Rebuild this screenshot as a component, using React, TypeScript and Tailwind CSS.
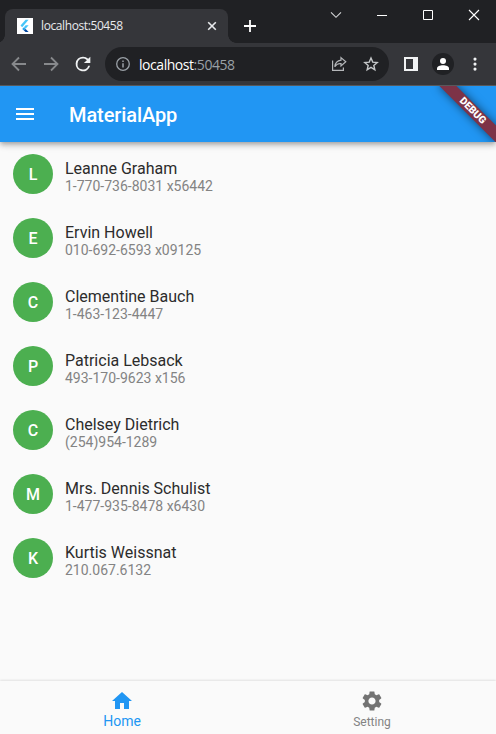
import React from "react";

type Contact = { name: string; phone: string };

const contacts: Contact[] = [
  { name: "Leanne Graham", phone: "1-770-736-8031 x56442" },
  { name: "Ervin Howell", phone: "010-692-6593 x09125" },
  { name: "Clementine Bauch", phone: "1-463-123-4447" },
  { name: "Patricia Lebsack", phone: "493-170-9623 x156" },
  { name: "Chelsey Dietrich", phone: "(254)954-1289" },
  { name: "Mrs. Dennis Schulist", phone: "1-477-935-8478 x6430" },
  { name: "Kurtis Weissnat", phone: "210.067.6132" },
];

function FlutterLogo() {
  return (
    <svg className="h-4 w-4 shrink-0" viewBox="0 0 16 16">
      <path d="M0 0h16v16H0z" fill="#fff" />
      <path d="M8.6 1.8h3L5.2 9.200 3.500 7.500z" fill="#45c5f8" />
      <path d="M8.600 7.200h3L8.600 10.700 6.900 9.200z" fill="#45c5f8" />
      <path d="M5.200 10.900L6.900 9.200l1.700 1.700-1.700 1.700z" fill="#1fa3ee" />
      <path d="M6.900 12.600l1.700-1.700 3 3.100h-3z" fill="#01459e" />
    </svg>
  );
}

function TabStrip() {
  return (
    <div className="flex h-[43px] items-end bg-[#202124] pl-[5px]">
      <div className="relative flex h-[34px] w-[223px] shrink-0 items-center rounded-t-lg bg-[#35363a] pl-3 pr-[11px]">
        <span className="absolute -left-2 bottom-0 h-2 w-2 bg-[radial-gradient(circle_at_0_0,#202124_7.5px,#35363a_8px)]" />
        <span className="absolute -right-2 bottom-0 h-2 w-2 bg-[radial-gradient(circle_at_100%_0,#202124_7.5px,#35363a_8px)]" />
        <FlutterLogo />
        <span className="ml-2 flex-1 font-['Open_Sans',sans-serif] text-[12px] tracking-[-0.4px] text-[#e8eaed]">
          localhost:50458
        </span>
        <svg className="h-[10px] w-[10px]" viewBox="0 0 10 10" stroke="#e8eaed" strokeWidth="1.6">
          <path d="M1.2 1.2l7.6 7.6M8.8 1.2L1.2 8.8" />
        </svg>
      </div>
      <svg className="mb-[11px] ml-4 h-3 w-3 shrink-0" viewBox="0 0 12 12" fill="#fff">
        <path d="M5.1 0h1.8v5.1H12v1.8H6.9V12H5.1V6.9H0V5.1h5.1z" />
      </svg>
      <div className="ml-[74px] flex h-full items-start pt-[9px]">
        <svg className="h-3 w-3" viewBox="0 0 12 12" fill="none" stroke="#d5d6d8" strokeWidth="1.1">
          <path d="M1 3.3l5 5 5-5" />
        </svg>
        <svg className="ml-[35px] h-3 w-[10px]" viewBox="0 0 10 12" fill="#fff">
          <path d="M0 6h10v1H0z" />
        </svg>
        <svg className="ml-[35px] h-3 w-3" viewBox="0 0 12 12" fill="none" stroke="#fff">
          <path d="M1.5 1.5h9v9h-9z" />
        </svg>
        <svg className="ml-[34px] h-3 w-3" viewBox="0 0 12 12" stroke="#fff" strokeWidth="1.1">
          <path d="M1 1l10 10M11 1L1 11" />
        </svg>
      </div>
    </div>
  );
}

function Toolbar() {
  return (
    <div className="flex h-[43px] items-center border-b border-[#57585b] bg-[#35363a] pl-[11px]">
      <svg className="h-4 w-4" viewBox="0 0 16 16" fill="none" stroke="#87898c" strokeWidth="1.8">
        <path d="M15 8H2M8 1.5L1.5 8 8 14.5" />
      </svg>
      <svg className="ml-4 h-4 w-4" viewBox="0 0 16 16" fill="none" stroke="#87898c" strokeWidth="1.8">
        <path d="M1 8h13M8 1.5L14.5 8 8 14.5" />
      </svg>
      <svg className="ml-3 h-6 w-6" viewBox="0 0 24 24">
        <path
          transform="translate(1 1) scale(.917)"
          fill="#f1f3f4"
          d="M17.65 6.35A7.96 7.96 0 0 0 12 4a8 8 0 1 0 7.73 10h-2.08A6 6 0 1 1 12 6c1.66 0 3.14.69 4.22 1.78L13 11h7V4z"
        />
      </svg>
      <div className="ml-[10px] flex h-[34px] w-[284px] items-center rounded-full bg-[#202124] pl-[11px] pr-[10px]">
        <svg className="h-[14px] w-[14px]" viewBox="0 0 14 14" fill="none" stroke="#9aa0a6" strokeWidth="1.3">
          <circle cx="7" cy="7" r="6.3" />
          <path d="M7 6.2v4.3M7 3.5V5" strokeWidth="1.5" />
        </svg>
        <span className="ml-[9px] flex-1 font-['Open_Sans',sans-serif] text-[14px] tracking-[-0.45px] text-white">
          localhost<span className="text-[#9aa0a6]">:50458</span>
        </span>
        <svg className="h-4 w-4" viewBox="0 0 16 16" fill="none" stroke="#b5b7ba" strokeWidth="1.2">
          <path d="M1.6 4.5v9.900h10.800v-3" />
          <path d="M10 1.600l4.800 4.200L10 10V7.500C7 7.300 5.200 8.400 3.800 10.700 4.200 7 6.500 4.700 10 4.200z" />
        </svg>
        <svg className="ml-4 h-4 w-4" viewBox="0 0 16 16" fill="none" stroke="#c4c7c9" strokeWidth="1.4">
          <path d="M8 2l1.75 4.1 4.45.4-3.38 2.9 1.02 4.35L8 11.4l-3.84 2.35L5.18 9.4 1.8 6.5l4.45-.4z" />
        </svg>
      </div>
      <svg className="ml-[15px] h-[14px] w-[14px]" viewBox="0 0 14 14" fill="#f1f3f4">
        <path d="M0 0h14v14H0zM2 2v10h7V2z" fillRule="evenodd" />
      </svg>
      <svg className="ml-[14px] h-[22px] w-[22px]" viewBox="0 0 22 22">
        <circle cx="11" cy="11" r="11" fill="#202124" />
        <circle cx="11" cy="8" r="3" fill="#fff" />
        <path d="M5 17v-1.500c0-2 3-3.200 6-3.200s6 1.200 6 3.200V17z" fill="#fff" />
      </svg>
      <svg className="ml-[19px] h-[14px] w-1" viewBox="0 0 4 14" fill="#f1f3f4">
        <circle cx="2" cy="2.100" r="1.550" />
        <circle cx="2" cy="7.100" r="1.550" />
        <circle cx="2" cy="12.100" r="1.550" />
      </svg>
    </div>
  );
}

function DebugBanner() {
  return (
    <div className="absolute right-0 top-0 h-14 w-24 overflow-hidden">
      <div className="absolute -right-10 top-7 flex h-3 w-20 origin-[40px_-28px] rotate-45 items-center justify-center bg-[#7d3347] text-[10.2px] font-black leading-none text-white shadow-[0_0_10px_rgba(0,0,0,0.55)]">
        <span className="translate-x-[1px]">DEBUG</span>
      </div>
    </div>
  );
}

function AppBar() {
  return (
    <header className="relative flex h-14 shrink-0 items-center bg-[#2196f3] pl-[13px] shadow-[0_2px_4px_-1px_rgba(0,0,0,0.2),0_4px_5px_rgba(0,0,0,0.14),0_1px_10px_rgba(0,0,0,0.12)]">
      <svg className="h-6 w-6" viewBox="0 0 24 24" fill="#fff">
        <path d="M3 18h18v-2H3v2zm0-5h18v-2H3v2zm0-7v2h18V6H3z" />
      </svg>
      <h1 className="ml-8 pt-0.5 text-[20px] font-medium leading-6 tracking-[-0.1px] text-white">MaterialApp</h1>
      <DebugBanner />
    </header>
  );
}

function ContactRow({ name, phone }: Contact) {
  return (
    <li className="flex h-16 items-center gap-3 pl-[13px]">
      <span className="flex h-10 w-10 items-center justify-center rounded-full bg-[#4caf50] pt-0.5 text-[16px] font-medium text-white">
        {name[0]}
      </span>
      <div className="pt-[5px]">
        <p className="text-[16px] leading-[19px] text-[#2c2c2c]">{name}</p>
        <p className="text-[14px] leading-4 text-[#838383]">{phone}</p>
      </div>
    </li>
  );
}

export default function App() {
  return (
    <div className="flex h-[734px] w-[496px] flex-col overflow-hidden bg-[#fafafa] font-[Roboto,sans-serif]">
      <div className="relative z-10 shrink-0">
        <TabStrip />
        <Toolbar />
      </div>
      <AppBar />
      <ul className="flex-1">
        {contacts.map((c) => (
          <ContactRow key={c.name} {...c} />
        ))}
      </ul>
      <nav className="grid h-[53px] shrink-0 grid-cols-2 bg-[#fafafa] shadow-[0_-1px_2px_rgba(0,0,0,0.1)]">
        <a className="flex flex-col items-center pr-1 pt-2 text-[#2196f3]">
          <svg className="h-6 w-6" viewBox="0 0 24 24" fill="currentColor">
            <path d="M10 20v-6h4v6h5v-8h3L12 3 2 12h3v8z" />
          </svg>
          <span className="text-[14px] leading-4">Home</span>
        </a>
        <a className="flex flex-col items-center pt-2 text-black/54">
          <svg className="h-6 w-6" viewBox="0 0 24 24" fill="currentColor">
            <path d="M19.14 12.94c.04-.3.06-.61.06-.94 0-.32-.02-.64-.07-.94l2.03-1.58c.18-.14.23-.41.12-.61l-1.92-3.32c-.12-.22-.37-.29-.59-.22l-2.39.96c-.5-.38-1.03-.7-1.62-.94l-.36-2.54c-.04-.24-.24-.41-.48-.41h-3.840c-.24 0-.43.17-.47.41l-.36 2.540c-.59.24-1.130.57-1.620.94l-2.390-.96c-.22-.08-.47 0-.59.22L2.740 8.870c-.12.21-.08.47.12.61l2.030 1.580c-.05.3-.09.63-.09.94s.02.64.07.94l-2.030 1.580c-.18.14-.23.41-.12.61l1.920 3.320c.12.22.37.29.59.22l2.390-.96c.5.38 1.030.7 1.620.94l.36 2.540c.05.24.24.41.48.41h3.840c.24 0 .44-.17.47-.41l.36-2.540c.59-.24 1.130-.56 1.620-.94l2.390.96c.22.08.47 0 .59-.22l1.920-3.320c.12-.22.07-.47-.12-.61l-2.010-1.580zM12 15.600c-1.980 0-3.600-1.620-3.600-3.600s1.620-3.600 3.600-3.600 3.600 1.620 3.600 3.600-1.620 3.600-3.600 3.600z" />
          </svg>
          <span className="mt-px text-[12px] leading-4 text-[#838383]">Setting</span>
        </a>
      </nav>
    </div>
  );
}
